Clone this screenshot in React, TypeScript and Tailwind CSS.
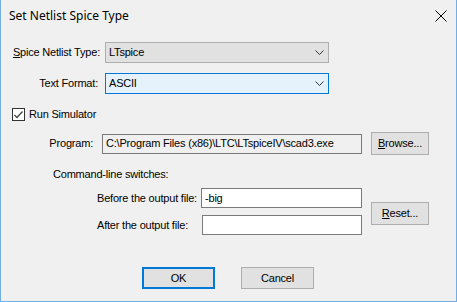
import React from "react";

const Chevron = () => (
  <svg width="9" height="5" viewBox="0 0 9 5" className="mr-[4px]">
    <path d="M0.5 0.5 L4.5 4.5 L8.5 0.5" fill="none" stroke="#333" strokeWidth="1" />
  </svg>
);

const Combo = ({ value, focused }: { value: string; focused?: boolean }) => (
  <div
    className={
      focused
        ? "w-[224px] h-[21px] flex items-center justify-between border border-[#0078d7] bg-[#e5f1fb] pl-[3px]"
        : "w-[224px] h-[21px] flex items-center justify-between border border-[#adadad] bg-[#e1e1e1] pl-[3px]"
    }
  >
    <span>{value}</span>
    <Chevron />
  </div>
);

const Button = ({ children, className }: { children: React.ReactNode; className?: string }) => (
  <div
    className={
      "h-[23px] flex items-center justify-center border border-[#adadad] bg-[#e1e1e1] " + (className ?? "")
    }
  >
    {children}
  </div>
);

export default function App() {
  return (
    <div
      className="w-[457px] h-[302px] bg-[#f0f0f0] border-l border-r border-b border-[#74ade2] flex flex-col text-[11px] tracking-[-0.2px] text-black leading-[13px] whitespace-nowrap"
      style={{ fontFamily: '"Liberation Sans", Arial, sans-serif' }}
    >
      {/* title bar */}
      <div className="h-[31px] flex items-center justify-between pl-[8px] pr-[8px] shrink-0">
        <span className="text-[12px] tracking-normal" style={{ fontFamily: '"Noto Sans", sans-serif' }}>
          Set Netlist Spice Type
        </span>
        <svg width="12" height="12" viewBox="0 0 12 12" className="mr-[1px]">
          <path d="M0.5 0.5 L11.5 11.5 M11.5 0.5 L0.5 11.5" stroke="#000" strokeWidth="1" />
        </svg>
      </div>

      <div className="mt-[11px] flex items-center">
        <div className="w-[104px] text-right pr-[5px]">
          <span className="underline">S</span>pice Netlist Type:
        </div>
        <Combo value="LTspice" />
      </div>

      <div className="mt-[10px] flex items-center">
        <div className="w-[104px] text-right pr-[7px]">Text Format:</div>
        <Combo value="ASCII" focused />
      </div>

      <div className="mt-[13px] h-[15px] flex items-center pl-[11px] gap-[4px]">
        <div className="w-[13px] h-[13px] border border-[#333] bg-white flex items-center justify-center">
          <svg width="9" height="8" viewBox="0 0 9 8">
            <path d="M0.5 4 L3 6.5 L8.5 0.5" fill="none" stroke="#444" strokeWidth="1.3" />
          </svg>
        </div>
        <span>Run Simulator</span>
      </div>

      <div className="mt-[10px] h-[23px] flex items-center">
        <div className="w-[101px] text-right pr-[9px]">Program:</div>
        <div className="w-[260px] h-[20px] border border-[#7a7a7a] bg-[#f0f0f0] flex items-center pl-[3px]">
          C:\Program Files (x86)\LTC\LTspiceIV\scad3.exe
        </div>
        <Button className="ml-[9px] w-[58px]">
          <span>
            <span className="underline">B</span>rowse...
          </span>
        </Button>
      </div>

      <div className="mt-[13px] pl-[52px]">Command-line switches:</div>

      <div className="mt-[7px] flex pl-[96px]">
        <div className="flex flex-col gap-[7px]">
          <div className="flex items-center h-[20px]">
            <div className="w-[104px] shrink-0">Before the output file:</div>
            <div className="w-[161px] h-[20px] border border-[#7a7a7a] bg-white flex items-center pl-[3px]">
              -big
            </div>
          </div>
          <div className="flex items-center h-[20px]">
            <div className="w-[105px] shrink-0">After the output file:</div>
            <div className="w-[160px] h-[20px] border border-[#7a7a7a] bg-white" />
          </div>
        </div>
        <Button className="ml-[9px] mt-[14px] w-[58px] h-[22px]">
          <span>
            <span className="underline">R</span>eset...
          </span>
        </Button>
      </div>

      <div className="mt-[32px] flex justify-center gap-[26px] pr-[1px]">
        <div className="w-[73px] h-[22px] flex items-center justify-center border-2 border-[#0078d7] bg-[#e1e1e1]">
          OK
        </div>
        <div className="w-[73px] h-[22px] flex items-center justify-center border border-[#adadad] bg-[#e1e1e1]">
          Cancel
        </div>
      </div>
    </div>
  );
}
